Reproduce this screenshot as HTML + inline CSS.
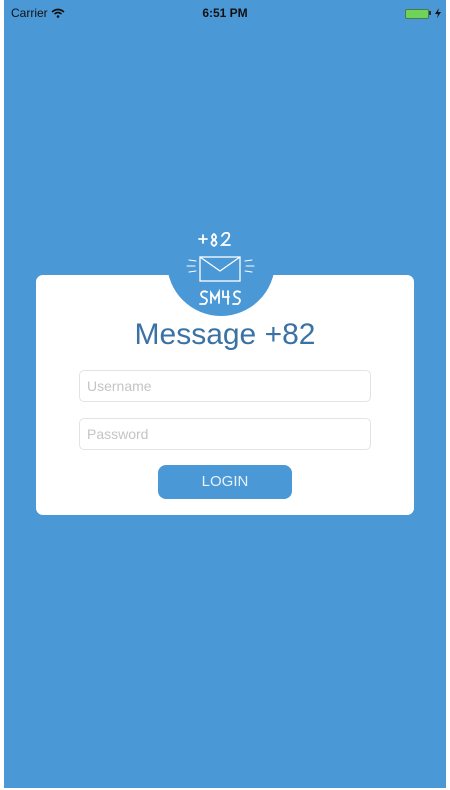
<!DOCTYPE html>
<html><head><meta charset="utf-8"><style>
html,body{margin:0;padding:0;width:450px;height:790px;background:#fff;overflow:hidden;font-family:"Liberation Sans",sans-serif}
.bg{position:absolute;left:4px;top:0;width:442px;height:788px;background:#4a98d6}
.card{position:absolute;left:36px;top:275px;width:378px;height:240px;background:#fff;border-radius:7px}
.circle{position:absolute;left:167px;top:208px;width:108px;height:108px;border-radius:50%;background:#4a98d6}
.title{position:absolute;left:0;width:450px;top:318px;text-align:center;font-size:30px;color:#3b72a4}
.inp{position:absolute;left:79px;height:30px;border:1px solid #e3e3e3;border-radius:5px;background:#fff;font-size:14px;color:#c4c4c4;line-height:30px;padding-left:7px;width:283px}
.btn{position:absolute;left:158px;top:465px;width:134px;height:34px;border-radius:8px;background:#4a98d6;color:#e8f2fb;font-size:15px;text-align:center;line-height:34px}
.sb{position:absolute;top:0;height:26px;line-height:26px;font-size:12px;color:#111}
</style></head><body>
<div class="bg"></div>
<div class="sb" style="left:11px">Carrier <svg width="14" height="10" viewBox="0 0 14 10" style="vertical-align:-1px"><path d="M1 4 Q7 -1 13 4" stroke="#111" stroke-width="1.6" fill="none"/><path d="M3.5 6 Q7 3 10.5 6" stroke="#111" stroke-width="1.6" fill="none"/><circle cx="7" cy="8.5" r="1.3" fill="#111"/></svg></div>
<div class="sb" style="left:0;width:450px;text-align:center;font-weight:bold">6:51 PM</div>
<div style="position:absolute;left:405px;top:9px;width:22px;height:8px;border:1px solid #4a7a50;border-radius:2px;background:#6fd35a"></div>
<div style="position:absolute;left:429px;top:11px;width:2px;height:4px;background:#333"></div>
<svg style="position:absolute;left:435px;top:8px" width="6" height="10" viewBox="0 0 6 10"><path d="M4 0 L0 6 H3 L2 10 L6 4 H3 Z" fill="#111"/></svg>
<div class="card"></div>
<div class="circle"></div>
<svg style="position:absolute;left:180px;top:225px" width="82" height="90" viewBox="0 0 82 90">
<g fill="none" stroke="#fff" stroke-width="1.8" stroke-linecap="round">
<path d="M19 14 h8 M23 10 v8"/>
<path d="M34 9 q-4 3 0 6 q5 3 0 6 q-5 -3 0 -6 q4 -3 0 -6z"/>
<path d="M42 11 q2 -4 6 -3 q3 2 -1 7 l-5 5 h8"/>
<rect x="20" y="32" width="40" height="24" stroke-width="1.3"/>
<path d="M20 32 L40 46 L60 32" stroke-width="1.3"/>
<path d="M9 35 l7 1 M7 41 l8 0 M9 47 l7 -1 M65 36 l7 -1 M66 41 l8 0 M65 46 l7 1" stroke-width="1"/>
<path d="M27 67 q-5 -2 -6 2 q0 3 4 4 q4 2 0 6 l-5 0"/>
<path d="M31 78 v-10 l4 6 l4 -7 v11"/>
<path d="M43 66 v6 h6 M48 66 v13"/>
<path d="M60 67 q-5 -2 -6 2 q0 3 4 4 q4 2 0 6 l-5 0"/>
</g></svg>
<div class="title">Message +82</div>
<div class="inp" style="top:370px">Username</div>
<div class="inp" style="top:418px">Password</div>
<div class="btn">LOGIN</div>
</body></html>
